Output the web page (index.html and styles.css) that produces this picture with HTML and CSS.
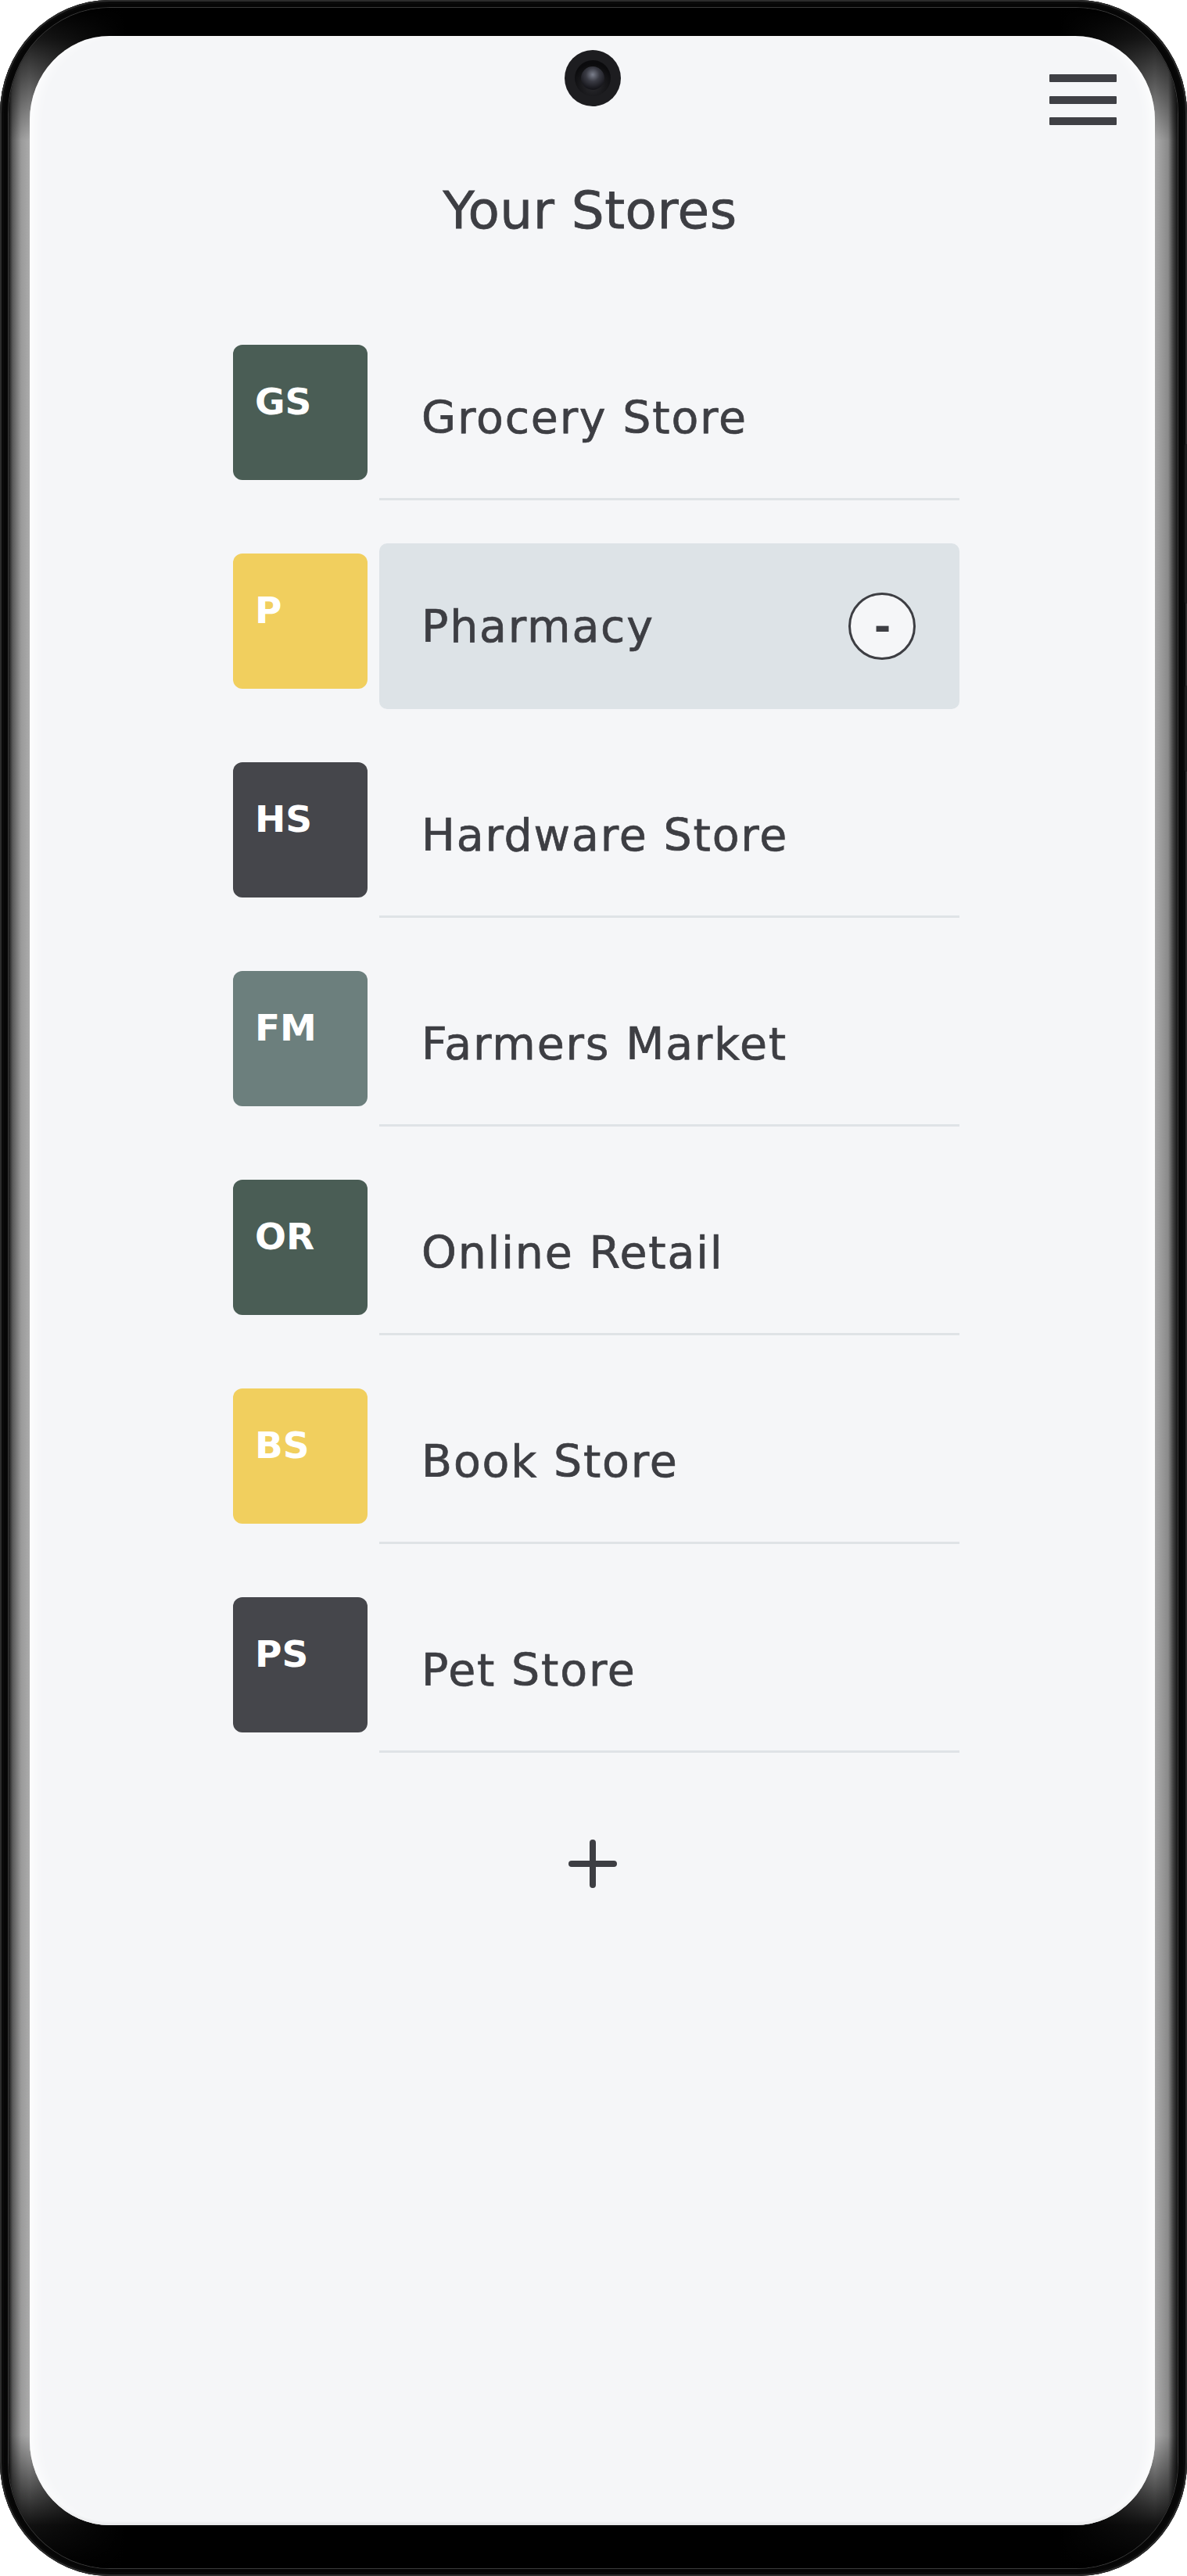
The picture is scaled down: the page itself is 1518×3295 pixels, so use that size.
FILE: index.html
```html
<!DOCTYPE html>
<html lang="en">
<head>
<meta charset="utf-8">
<title>Your Stores</title>
<link rel="stylesheet" href="styles.css">
</head>
<body>
<div class="phone">
  <span class="side-btn side-btn-a"></span>
  <span class="side-btn side-btn-b"></span>
  <div class="bezel">
    <div class="screen">
      <div class="camera"><div class="camera-ring"><div class="camera-lens"></div></div></div>
      <header class="topbar">
        <button class="menu" aria-label="Menu"><span></span><span></span><span></span></button>
      </header>
      <h1 class="title">Your Stores</h1>
      <ul class="stores">
        <li class="store"><div class="avatar c-green">GS</div><div class="cell"><span class="name">Grocery Store</span></div></li>
        <li class="store"><div class="avatar c-yellow">P</div><div class="cell active"><span class="name">Pharmacy</span><button class="remove" aria-label="Remove">-</button></div></li>
        <li class="store"><div class="avatar c-dark">HS</div><div class="cell"><span class="name">Hardware Store</span></div></li>
        <li class="store"><div class="avatar c-sage">FM</div><div class="cell"><span class="name">Farmers Market</span></div></li>
        <li class="store"><div class="avatar c-green">OR</div><div class="cell"><span class="name">Online Retail</span></div></li>
        <li class="store"><div class="avatar c-yellow">BS</div><div class="cell"><span class="name">Book Store</span></div></li>
        <li class="store"><div class="avatar c-dark">PS</div><div class="cell"><span class="name">Pet Store</span></div></li>
      </ul>
      <button class="add" aria-label="Add store">
        <svg viewBox="0 0 62 62" width="62" height="62"><path d="M31 4 V58 M4 31 H58" stroke="#3d3e43" stroke-width="8" stroke-linecap="round" fill="none"/></svg>
      </button>
    </div>
  </div>
</div>
</body>
</html>
```

FILE: styles.css
```css
html, body {
  margin: 0;
  padding: 0;
  background: #ffffff;
}

body {
  width: 1518px;
  height: 3295px;
  overflow: hidden;
}

.phone {
  position: relative;
  box-sizing: border-box;
  width: 1518px;
  height: 3295px;
  padding: 10px 12px 10px 11px;
  border-radius: 140px / 145px;
  background: #060606;
  box-shadow: inset 0 0 0 2px #2c2c2c, inset 0 0 0 5px #0a0a0a;
}

.side-btn {
  position: absolute;
  right: 0;
  width: 3px;
  background: #1e1e1e;
  border-radius: 2px 0 0 2px;
}

.side-btn-a { top: 568px; height: 204px; }
.side-btn-b { top: 877px; height: 110px; }

.bezel {
  box-sizing: border-box;
  height: 100%;
  padding: 36px 29px 55px 27px;
  border-radius: 130px / 135px;
  background:
    linear-gradient(to bottom, #000 0, rgba(0,0,0,0.85) 40px, rgba(0,0,0,0) 170px, rgba(0,0,0,0) calc(100% - 170px), rgba(0,0,0,0.9) calc(100% - 55px), #000 100%),
    linear-gradient(to right, #151515 0, #5a5a5a 5px, #9a9a9a 16px, #ababab 27px, #000 150px, #000 calc(100% - 150px), #ababab calc(100% - 29px), #8a8a8a calc(100% - 12px), #444 calc(100% - 6px), #111 100%);
  box-shadow: 0 0 0 1px #3a3a3a;
}

.screen {
  position: relative;
  box-sizing: border-box;
  height: 100%;
  overflow: hidden;
  border-radius: 102px / 108px;
  background: #f5f6f8;
  box-shadow:
    inset 14px 0 18px -10px #ffffff,
    inset -14px 0 18px -10px #ffffff,
    inset 0 -5px 3px -2px #e3e4e6;
}

.camera {
  position: absolute;
  top: 18px;
  left: 50%;
  width: 72px;
  height: 72px;
  margin-left: -36px;
  border-radius: 50%;
  background: #1d1d20;
  display: flex;
  align-items: center;
  justify-content: center;
}

.camera-ring {
  width: 46px;
  height: 46px;
  border-radius: 50%;
  background: radial-gradient(circle at 50% 70%, #2a2a2e 0, #0b0b0d 70%);
  display: flex;
  align-items: center;
  justify-content: center;
}

.camera-lens {
  width: 30px;
  height: 30px;
  border-radius: 50%;
  background: radial-gradient(circle at 50% 35%, #7b7f8c 0, #3a3b44 35%, #15151a 75%);
}

.topbar {
  display: flex;
  justify-content: flex-end;
  padding: 49px 49px 0 0;
}

.menu {
  display: flex;
  flex-direction: column;
  justify-content: space-between;
  width: 86px;
  height: 65px;
  padding: 0;
  border: 0;
  background: none;
  cursor: pointer;
}

.menu span {
  display: block;
  height: 10px;
  border-radius: 1px;
  background: #3f4045;
}

.title {
  margin: 71px 0 0;
  font-family: "DejaVu Sans", "Noto Sans", sans-serif;
  font-size: 66px;
  font-weight: 400;
  line-height: normal;
  letter-spacing: 0.5px;
  text-align: center;
  color: #3d3e43;
  -webkit-text-stroke: 0.8px #3d3e43;
  padding-right: 6px;
}

.stores {
  list-style: none;
  display: flex;
  flex-direction: column;
  gap: 55px;
  width: 929px;
  margin: 120px 0 0 260px;
  padding: 0;
}

.store {
  display: flex;
  align-items: flex-start;
  gap: 15px;
}

.avatar {
  flex: none;
  box-sizing: border-box;
  width: 172px;
  height: 173px;
  margin-top: 13px;
  padding: 45px 0 0 28px;
  border-radius: 12px;
  font-family: "DejaVu Sans", sans-serif;
  font-weight: 700;
  font-size: 47px;
  line-height: normal;
  color: #ffffff;
}

.c-green { background: #4a5d55; }
.c-yellow { background: #f1cf5e; }
.c-dark { background: #45464b; }
.c-sage { background: #6c7f7d; }

.cell {
  flex: 1;
  box-sizing: border-box;
  height: 212px;
  display: flex;
  align-items: center;
  justify-content: space-between;
  padding: 2px 56px 0 54px;
  border-bottom: 3px solid #dfe3e6;
}

.cell.active {
  background: #dde3e7;
  border-bottom-color: transparent;
  border-radius: 10px;
}

.name {
  font-family: "DejaVu Sans", "Noto Sans", sans-serif;
  font-size: 57px;
  line-height: normal;
  letter-spacing: 1.8px;
  color: #3d3e43;
  -webkit-text-stroke: 0.7px #3d3e43;
}

.remove {
  flex: none;
  box-sizing: border-box;
  width: 86px;
  height: 86px;
  padding: 0 0 0 1px;
  border: 3px solid #3d3e43;
  border-radius: 50%;
  background: #f5f6f8;
  display: flex;
  align-items: center;
  justify-content: center;
  font-family: "DejaVu Sans", sans-serif;
  font-weight: 700;
  font-size: 52px;
  line-height: 1;
  color: #3d3e43;
  cursor: pointer;
}

.add {
  display: block;
  width: 62px;
  height: 62px;
  margin: 111px auto 0;
  padding: 0;
  border: 0;
  background: none;
  cursor: pointer;
}

.add svg {
  display: block;
}
```
